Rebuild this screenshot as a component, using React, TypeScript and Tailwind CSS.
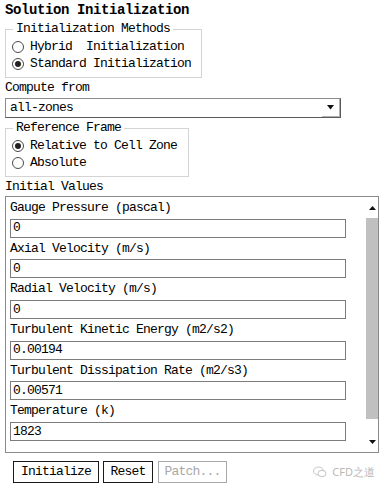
import React from "react";

const fields = [
    { label: "Gauge Pressure (pascal)", value: "0" },
    { label: "Axial Velocity (m/s)", value: "0" },
    { label: "Radial Velocity (m/s)", value: "0" },
    { label: "Turbulent Kinetic Energy (m2/s2)", value: "0.00194" },
    { label: "Turbulent Dissipation Rate (m2/s3)", value: "0.00571" },
    { label: "Temperature (k)", value: "1823" },
];

function Radio({ checked, label }: { checked?: boolean; label: string }) {
    return (
        <div className="h-[17px] flex items-center pl-[6px]">
            <span className="w-[12px] h-[12px] rounded-full border border-[#4a4a4a] bg-white flex items-center justify-center shrink-0">
                {checked && <span className="w-[6px] h-[6px] rounded-full bg-[#222]" />}
            </span>
            <span className="ml-[6px] whitespace-pre">{label}</span>
        </div>
    );
}

function Group({ title, width, children }: { title: string; width: string; children: React.ReactNode }) {
    return (
        <fieldset className={`ml-[5px] ${width} border border-[#d4d4d4] pb-[5px]`}>
            <legend className="ml-[7px] px-[3px] leading-[14px] h-[14px]">{title}</legend>
            <div className="pt-[2px]">{children}</div>
        </fieldset>
    );
}

export default function App() {
    return (
        <div className="w-[385px] h-[490px] bg-white text-black font-mono text-[13px] tracking-[-0.8px] leading-[14px] overflow-hidden">
            <div className="h-[20px] leading-[20px] pl-[5px] text-[14px] font-bold tracking-[-0.4px]">
                Solution Initialization
            </div>

            <div className="mt-[2px]">
                <Group title="Initialization Methods" width="w-[197px]">
                    <Radio label="Hybrid  Initialization" />
                    <Radio checked label="Standard Initialization" />
                </Group>
            </div>

            <div className="mt-[3px] pl-[5px] h-[14px]">Compute from</div>
            <div className="mt-[3px] ml-[5px] w-[336px] h-[20px] border border-[#8c8c8c] border-r-[#5a5a5a] border-b-[#5a5a5a] flex items-center">
                <span className="pl-[4px] flex-1">all-zones</span>
                <div className="w-[18px] h-full flex items-center justify-center border-r border-b border-[#b0b0b0]">
                    <svg width="8" height="5" viewBox="0 0 8 5">
                        <path d="M0 0 H7 L3.5 4.5 Z" fill="#111" />
                    </svg>
                </div>
            </div>

            <div className="mt-[3px]">
                <Group title="Reference Frame" width="w-[184px]">
                    <Radio checked label="Relative to Cell Zone" />
                    <Radio label="Absolute" />
                </Group>
            </div>

            <div className="mt-[3px] pl-[5px] h-[14px]">Initial Values</div>
            <div className="mt-[2px] ml-[5px] w-[374px] h-[257px] border border-[#8a8a8a] flex">
                <div className="pl-[4px] w-[341px]">
                    {fields.map((f) => (
                        <div key={f.label}>
                            <div className="h-[21.7px] flex items-center">{f.label}</div>
                            <div className="h-[19px] w-[336px] border border-[#7c7c7c] flex items-center pl-[2px]">
                                {f.value}
                            </div>
                        </div>
                    ))}
                </div>
                <div className="ml-auto w-[12px] flex flex-col">
                    <div className="h-[21px] flex items-center justify-center">
                        <svg width="7" height="4" viewBox="0 0 7 4">
                            <path d="M3.5 0 L7 4 H0 Z" fill="#111" />
                        </svg>
                    </div>
                    <div className="h-[201px] bg-[#c0c0c0]" />
                    <div className="flex-1 flex items-end justify-center pb-[8px]">
                        <svg width="7" height="4" viewBox="0 0 7 4">
                            <path d="M0 0 H7 L3.5 4 Z" fill="#111" />
                        </svg>
                    </div>
                </div>
            </div>

            <div className="mt-[8px] flex items-center pl-[13px] pr-[10px]">
                <button className="h-[22px] w-[86px] border border-[#1a1a1a] bg-white flex items-center justify-center">
                    Initialize
                </button>
                <button className="ml-[4px] h-[22px] w-[50px] border border-[#1a1a1a] bg-white flex items-center justify-center">
                    Reset
                </button>
                <button className="ml-[5px] h-[22px] w-[69px] border border-[#a8a8a8] text-[#a8a8a8] bg-white flex items-center justify-center">
                    Patch...
                </button>
                <div className="ml-auto flex items-center gap-[5px] text-[#b8b8b8] text-[11px] tracking-normal font-sans">
                    <svg width="14" height="12" viewBox="0 0 14 12" fill="none" stroke="#c4c4c4" strokeWidth="1">
                        <ellipse cx="5.5" cy="5" rx="5" ry="4" />
                        <ellipse cx="9" cy="7.5" rx="4" ry="3.2" fill="white" />
                    </svg>
                    <span>CFD之道</span>
                </div>
            </div>
        </div>
    );
}
